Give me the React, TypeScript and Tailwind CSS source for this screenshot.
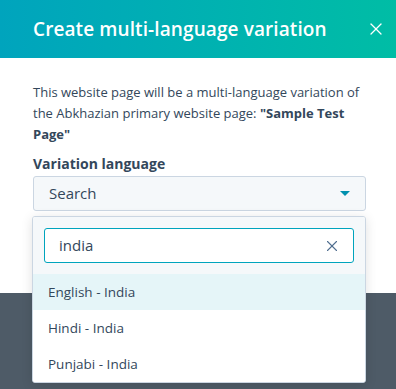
import { X } from 'lucide-react'

const options = ['English - India', 'Hindi - India', 'Punjabi - India']

export default function App() {
  return (
    <div
      className="relative w-[396px] h-[389px] overflow-hidden bg-[#4e5b67] text-[#33475b]"
      style={{ fontFamily: '"Open Sans", "Liberation Sans", sans-serif' }}
    >
      <div className="bg-white h-[293px]">
        <div className="h-[58px] flex items-center justify-between pl-[33px] pr-[5px] bg-gradient-to-r from-[#00a4bd] to-[#00bda5]">
          <h2 className="text-white text-[19px] font-semibold tracking-[0.1px]">
            Create multi-language variation
          </h2>
          <button className="w-[30px] h-[30px] flex items-center justify-center text-white">
            <X size={20} strokeWidth={1.5} />
          </button>
        </div>

        <div className="pl-[33px] pr-[30px] pt-[24px]">
          <p className="text-[13px] leading-[21px]">
            This website page will be a multi-language variation of the
            Abkhazian primary website page:{' '}
            <span className="font-bold">"Sample Test Page"</span>
          </p>
          <div className="mt-[8px] text-[14px] leading-[21px] font-bold">
            Variation language
          </div>
          <div className="mt-[2px] h-[35px] rounded-[3px] border border-[#cbd6e2] bg-[#f5f8fa] flex items-center justify-between pl-[15px] pr-[15px]">
            <span className="text-[15px]">Search</span>
            <span className="w-0 h-0 border-l-[5px] border-r-[5px] border-t-[5px] border-l-transparent border-r-transparent border-t-[#0091ae]" />
          </div>
        </div>
      </div>

      <div className="absolute left-[32px] top-[216px] w-[334px] rounded-[3px] border border-[#cbd6e2] bg-white shadow-[0_2px_12px_rgba(0,0,0,0.12)] overflow-hidden">
        <div className="bg-[#f5f8fa] p-[11px]">
          <div className="h-[35px] rounded-[3px] border border-[#00a4bd] bg-white flex items-center justify-between pl-[14px] pr-[12px]">
            <span className="text-[15px]">india</span>
            <X size={18} strokeWidth={1.5} className="text-[#516f90]" />
          </div>
        </div>
        {options.map((o, i) => (
          <div
            key={o}
            className={`h-[36px] flex items-center pl-[15px] text-[13.5px] ${
              i === 0 ? 'bg-[#e5f5f8]' : 'bg-white'
            }`}
          >
            {o}
          </div>
        ))}
      </div>
    </div>
  )
}
